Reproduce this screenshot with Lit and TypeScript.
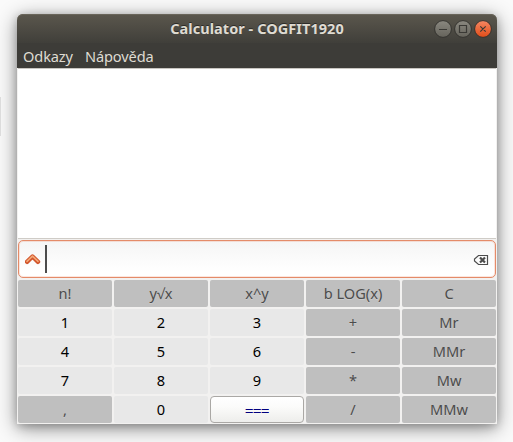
import { LitElement, html, css, svg } from "lit";
import { customElement, property } from "lit/decorators.js";

@customElement("calc-key")
class CalcKey extends LitElement {
  @property() label = "";
  static styles = css`
    :host {
      display: flex;
      align-items: center;
      justify-content: center;
      height: 27px;
      box-sizing: border-box;
      padding-bottom: 2px;
      border-radius: 2px;
      background: #bfbfbf;
      color: #4c4c4c;
      text-shadow: 0 1px rgba(255, 255, 255, 0.2);
      line-height: 20px;
      white-space: pre;
    }
    :host([kind="digit"]) {
      background: #e8e8e8;
      color: #000;
      text-shadow: none;
    }
    :host([kind="equals"]) {
      padding: 0;
      border: 1px solid #aaa8a5;
      border-radius: 4px;
      background: linear-gradient(#fff, #fbfbfa 40%, #ededeb);
      color: #00007f;
      letter-spacing: -0.4px;
      text-shadow: 0 0 0.5px #00007f;
    }
  `;
  render() {
    return html`<span>${this.label}</span>`;
  }
}

const KEYS: string[] = [
  "n!", "y√x", "x^y", "b LOG(x)", "C",
  "1", "2", "3", "+", "Mr",
  "4", "5", "6", "-", "MMr",
  "7", "8", "9", "*", "Mw",
  ",", "0", "===", "/", "MMw",
];

const kindOf = (k: string) => (k === "===" ? "equals" : /^\d$/.test(k) ? "digit" : "function");

@customElement("app-root")
class AppRoot extends LitElement {
  static styles = css`
    :host {
      display: block;
      position: relative;
      box-sizing: border-box;
      width: 513px;
      height: 442px;
      padding: 14px 16px 18px 17px;
      overflow: hidden;
      background: #fafafa;
      font: 14.6px/20px "Noto Sans", "Open Sans", sans-serif;
    }
    .neighbour {
      position: absolute;
      left: 0;
      top: 97px;
      width: 1px;
      height: 39px;
      background: #dcdcdc;
    }
    .window {
      display: flex;
      flex-direction: column;
      width: 480px;
      height: 410px;
      border-radius: 6px 6px 0 0;
      background: #f2f1f0;
      box-shadow: 0 4px 20px rgba(0, 0, 0, 0.45), 0 2px 8px rgba(0, 0, 0, 0.2);
    }
    .head {
      height: 54px;
      border-radius: 6px 6px 0 0;
      background: linear-gradient(#5b574d, #403f3a 29px, #3d3c38 29px);
      box-shadow: inset 0 1px #69655a;
      color: #dfdbd2;
    }
    .title {
      display: grid;
      grid-template-columns: 1fr auto;
      height: 30px;
      align-items: center;
      padding-right: 5px;
    }
    .title b {
      grid-area: 1 / 1 / 2 / 3;
      justify-self: center;
      font-size: 14.5px;
      letter-spacing: 0.05px;
      padding: 0 0 2px 5px;
      text-shadow: 0 -1px #2c2b28;
    }
    .controls {
      grid-area: 1 / 2;
      display: block;
    }
    .menu {
      display: flex;
      gap: 12px;
      padding: 2px 6px 0;
      line-height: 20px;
      letter-spacing: -0.12px;
    }
    .output {
      height: 169px;
      margin: 0 1px 0 1px;
      background: #fff;
      border-top: 1px solid #c9c6c1;
      border-bottom: 1px solid #cfccc7;
    }
    .entry {
      display: flex;
      align-items: center;
      box-sizing: border-box;
      height: 38px;
      margin: 1px 1px 2px;
      padding: 0 6px;
      border: 1px solid #e48b69;
      border-radius: 5px;
      background: linear-gradient(#f5f5f5, #fff 85%);
      box-shadow: inset 0 0 0 1px rgba(240, 119, 70, 0.18);
    }
    .caret {
      width: 2px;
      height: 28px;
      margin-left: 4px;
      background: #4c4c4c;
    }
    .clear {
      margin-left: auto;
      padding-top: 1px;
    }
    .keys {
      display: grid;
      grid-template-columns: repeat(5, 94px);
      gap: 2px;
      padding: 0 1px;
    }
  `;

  render() {
    return html`
      <div class="neighbour"></div>
      <div class="window">
        <div class="head">
          <div class="title">
            <b>Calculator - COGFIT1920</b>
            <svg class="controls" width="58" height="18" viewBox="0 0 58 18">
              <defs>
                <linearGradient id="g" x2="0" y2="1"><stop stop-color="#8a8880" /><stop offset="1" stop-color="#65635b" /></linearGradient>
                <linearGradient id="o" x2="0" y2="1"><stop stop-color="#f58763" /><stop offset="1" stop-color="#e04c18" /></linearGradient>
              </defs>
              ${[9, 29, 49].map((x, i) => svg`<circle cx=${x} cy="9" r="8.4" fill=${i === 2 ? "url(#o)" : "url(#g)"} stroke="#34332f" />`)}
              <path d="M5 9.5h8M25.5 5.5h7v7h-7zM46.3 6.3l5.4 5.4M51.7 6.3l-5.4 5.4" fill="none" stroke="#3a3935" stroke-width="1.2" />
            </svg>
          </div>
          <div class="menu"><span>Odkazy</span><span>Nápověda</span></div>
        </div>
        <div class="output"></div>
        <div class="entry">
          <svg width="16" height="12" viewBox="0 0 16 12">
            <path d="M2 8.8L7.5 3.5 13 8.8" fill="none" stroke="#d2542a" stroke-width="4.4" stroke-linecap="round" stroke-linejoin="round" />
            <path d="M2 8.4L7.5 3.1 13 8.4" fill="none" stroke="#f3a878" stroke-width="1.6" stroke-linecap="round" stroke-linejoin="round" />
          </svg>
          <span class="caret"></span>
          <svg class="clear" width="16" height="12" viewBox="0 0 16 12">
            <path d="M5.5 1.5h9v9h-9L1.5 7V5z" fill="none" stroke="#4c4c4c" stroke-width="1.2" />
            <path d="M7 3.5l5 5M12 3.5l-5 5" stroke="#4c4c4c" stroke-width="2.2" />
          </svg>
        </div>
        <div class="keys">
          ${KEYS.map((k) => html`<calc-key kind=${kindOf(k)} .label=${k}></calc-key>`)}
        </div>
      </div>
    `;
  }
}
